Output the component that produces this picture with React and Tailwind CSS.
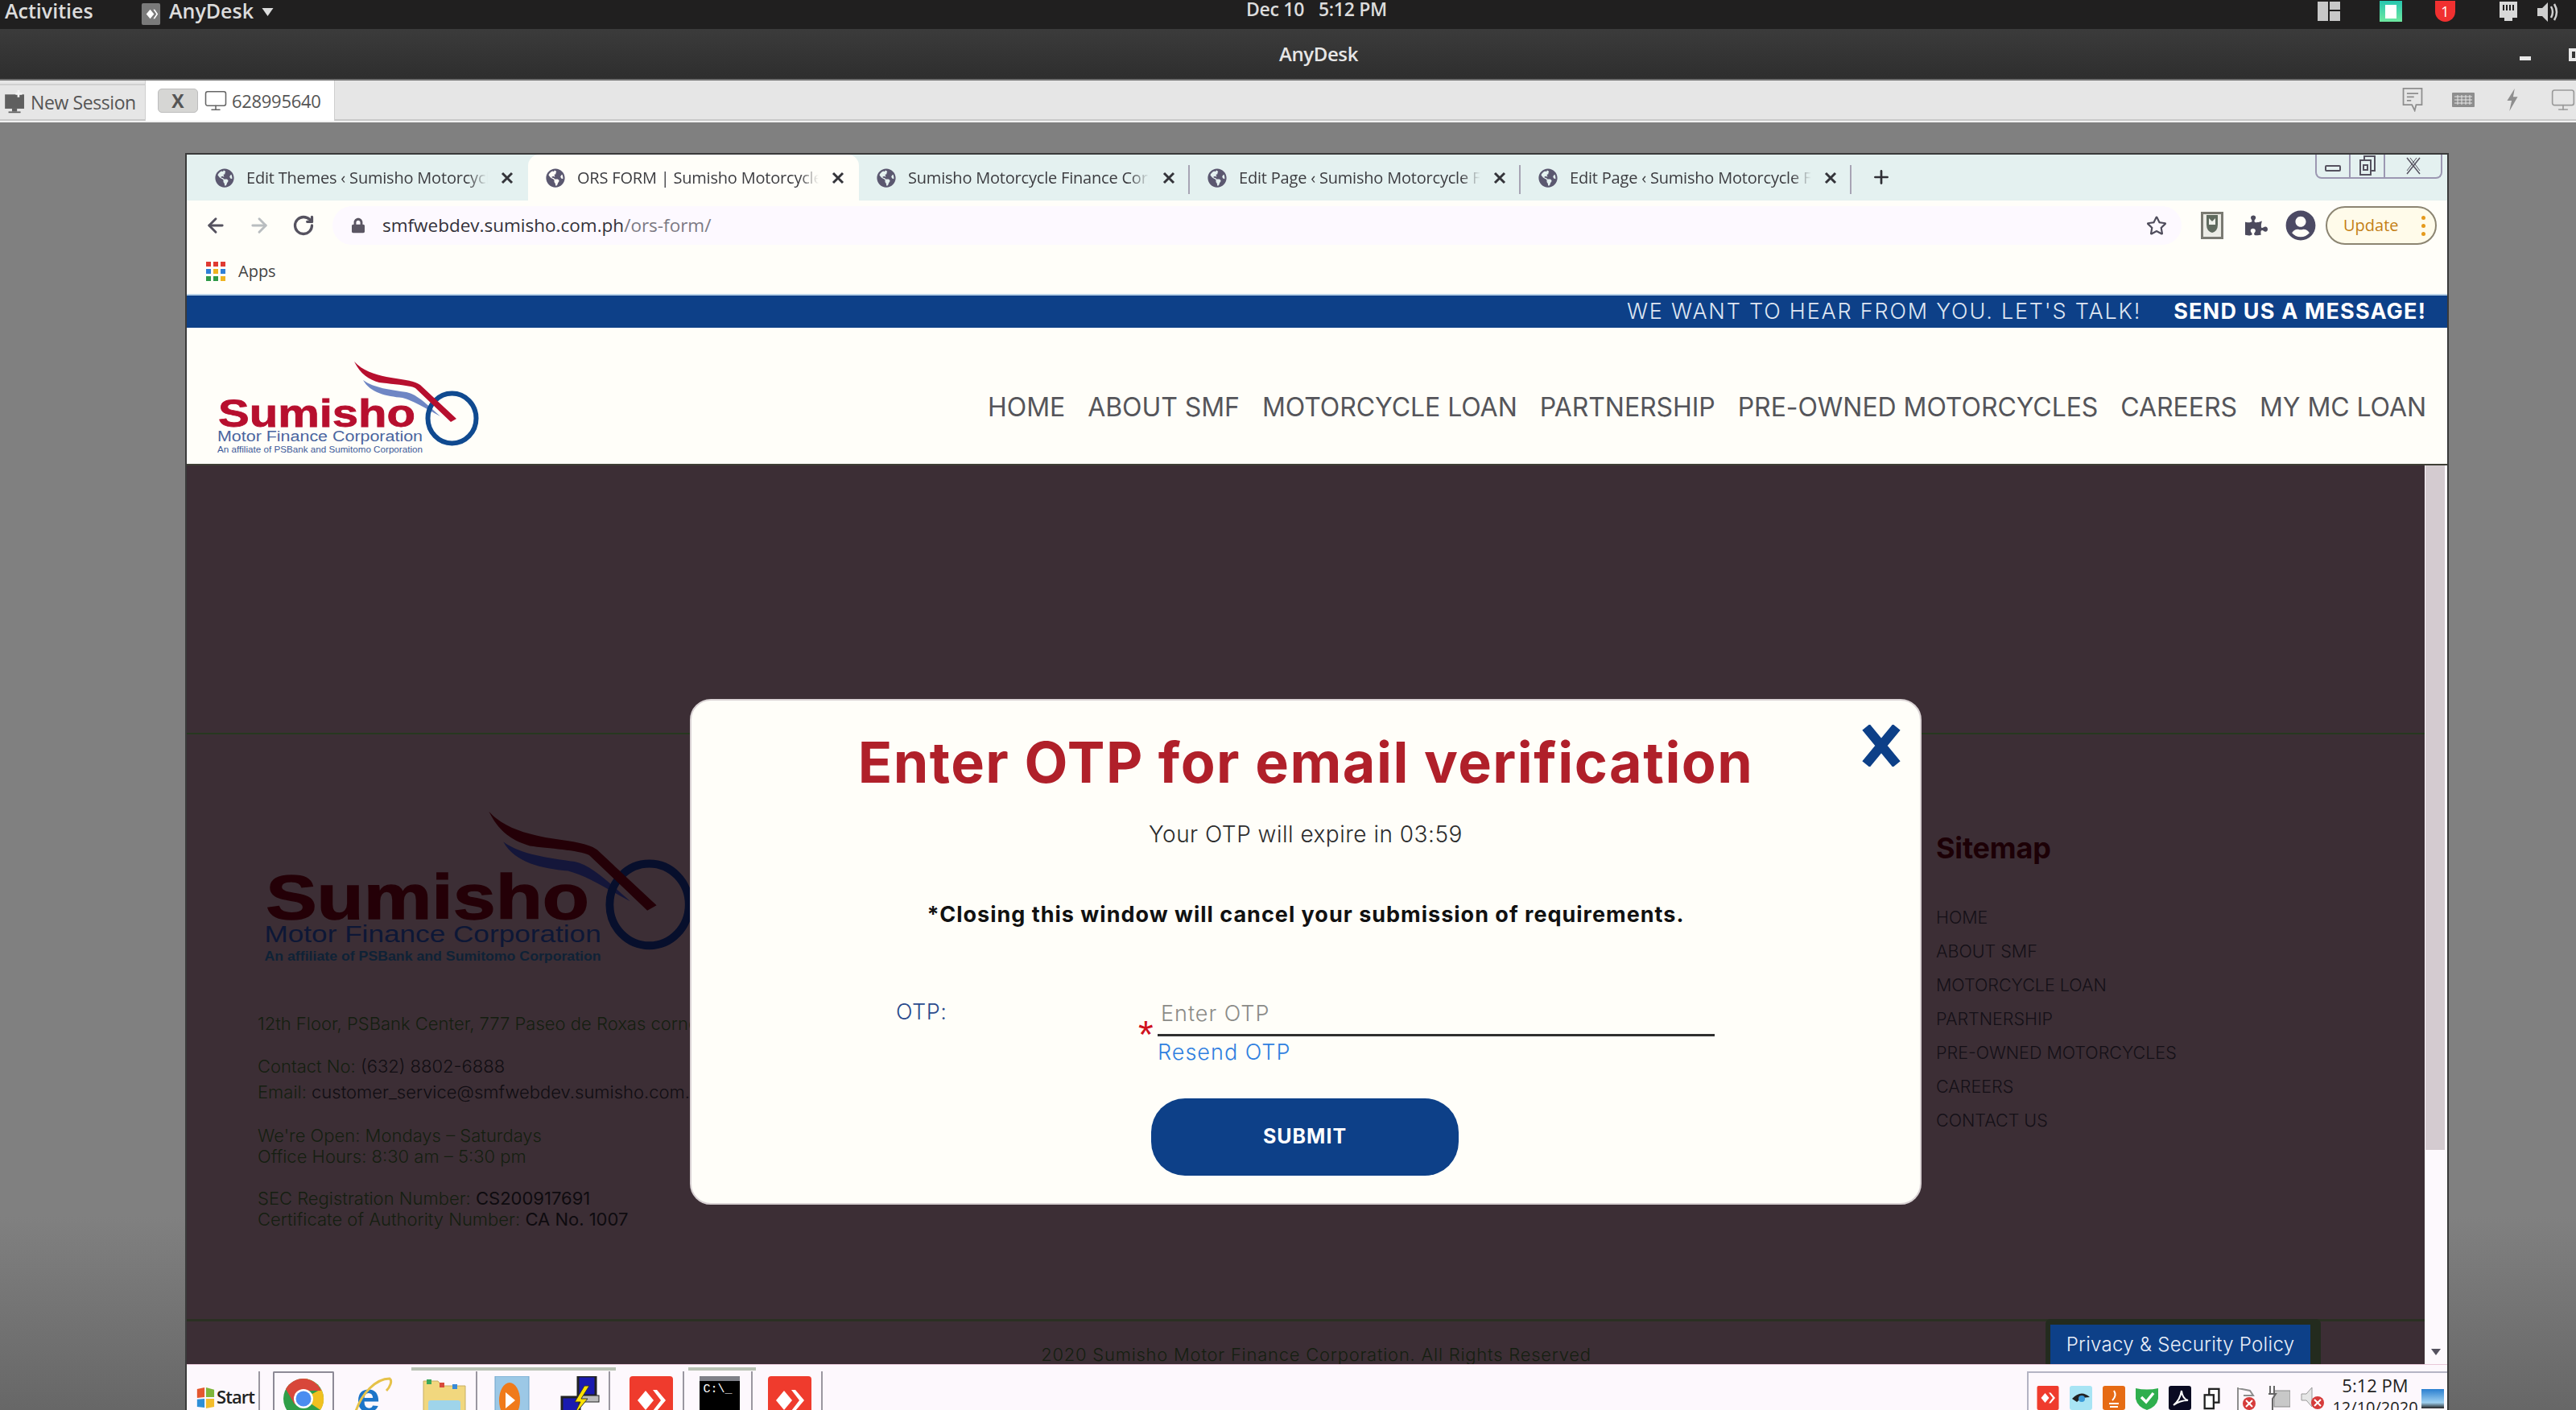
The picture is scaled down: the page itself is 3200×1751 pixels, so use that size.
import React from "react";
import { FaGlobeAmericas, FaPuzzlePiece, FaUserCircle, FaRegStar, FaLock } from "react-icons/fa";
import { ArrowLeft, ArrowRight, RotateCw, Plus, Monitor } from "lucide-react";

function Logo({ dark, className }) {
  const c = dark
    ? { red: "#240007", b1: "#14163a", b2: "#2f2d48", ring: "#070f2c", sub: "#0d1736", aff: "#0f2236" }
    : { red: "#b70f2e", b1: "#3a5aa8", b2: "#c8d0e8", ring: "#104a90", sub: "#4a659f", aff: "#3d5a98" };
  return (
    <svg viewBox="0 0 345 125" className={className}>
      <path d="M191 32 C205 42 225 44 245 47 C258 50 270 62 287 77 C270 68 255 58 240 54 C220 52 200 48 191 32Z" fill={dark ? c.b1 : "#6f86c4"} />
      <ellipse cx="301.5" cy="79.5" rx="30" ry="31" fill="none" stroke={c.ring} strokeWidth="6" />
      <path d="M180 9 C190 20 205 25 220 28 S255 32 262 38 L307 80 L300 84 L256 42 C248 38 225 37 211 35 C198 31 188 25 180 9Z" fill={c.red} />
      <text x="11" y="90" fontFamily="'Liberation Sans',sans-serif" fontWeight="700" fontSize="48" textLength="245" lengthAdjust="spacingAndGlyphs" fill={c.red} stroke={c.red} strokeWidth="0.8">Sumisho</text>
      <text x="10" y="108" fontFamily="'Liberation Sans',sans-serif" fontSize="18" textLength="255" lengthAdjust="spacingAndGlyphs" fill={c.sub}>Motor Finance Corporation</text>
      <text x="10" y="122" fontFamily="'Liberation Sans',sans-serif" fontWeight={dark ? 700 : 400} fontSize="10.5" textLength="255" lengthAdjust="spacingAndGlyphs" fill={c.aff}>An affiliate of PSBank and Sumitomo Corporation</text>
    </svg>
  );
}

function Tab({ title, active, sep }) {
  return (
    <div className={`relative w-[411px] h-full flex items-center pl-[22px] shrink-0 ${active ? "bg-[#fffef9] rounded-t-[14px]" : ""}`}>
      <FaGlobeAmericas className="w-6 h-6 text-[#5b5870] shrink-0 mr-[15px]" />
      <div className="w-[300px] shrink-0 overflow-hidden whitespace-nowrap text-[20px] tracking-[-0.2px] text-[#3c3c40] font-['Open_Sans',sans-serif] [mask-image:linear-gradient(to_right,black_92%,transparent)]">{title}</div>
      <svg viewBox="0 0 16 16" className="w-4 h-4 ml-[16px] shrink-0" stroke="#34343a" strokeWidth="3"><path d="M2 2 L14 14 M14 2 L2 14" /></svg>
      {sep && <div className="absolute right-0 top-[13px] h-[36px] w-[2px] bg-[#a7a4b4]" />}
    </div>
  );
}

function AnyDeskMark({ className }) {
  return (
    <svg viewBox="0 0 54 60" className={className}>
      <rect width="54" height="60" rx="4" fill="#ef3b2d" />
      <path d="M10 30 L20 18 L30 30 L20 42Z" fill="#fff" />
      <path d="M29 17 L34 17 L45 30 L34 43 L29 43 L39 30Z" fill="#fff" />
    </svg>
  );
}

function Cell({ className, children }) {
  return <div className={`h-[60px] flex justify-center pt-[6px] shrink-0 ${className}`}>{children}</div>;
}

const sitemap = ["HOME", "ABOUT SMF", "MOTORCYCLE LOAN", "PARTNERSHIP", "PRE-OWNED MOTORCYCLES", "CAREERS", "CONTACT US"];
const nav = ["HOME", "ABOUT SMF", "MOTORCYCLE LOAN", "PARTNERSHIP", "PRE-OWNED MOTORCYCLES", "CAREERS", "MY MC LOAN"];

export default function App() {
  return (
    <div className="w-[3200px] h-[1751px] overflow-hidden flex flex-col font-[Inter,sans-serif] bg-[#808080]">
      {/* GNOME top bar */}
      <div className="h-9 shrink-0 bg-[#201f1f] flex items-center justify-between relative text-[#dcdcdc] font-['Open_Sans',sans-serif] font-semibold text-[25px] leading-none pb-[10px] overflow-hidden">
        <div className="flex items-center">
          <span className="ml-[6px] w-[169px]">Activities</span>
          <svg viewBox="0 0 24 28" className="w-[25px] h-[27px] mt-[8px]"><rect width="24" height="28" rx="2" fill="#7a7a7a" /><path d="M6 14 L11 8 L16 14 L11 20Z" fill="#fff" /><path d="M15 8 L17 8 L21 14 L17 20 L15 20 L19 14Z" fill="#fff" /></svg>
          <span className="ml-[10px]">AnyDesk</span>
          <svg viewBox="0 0 14 10" className="w-[15px] h-[10px] ml-[10px] mt-[4px]"><path d="M0 0 H14 L7 10Z" fill="#dcdcdc" /></svg>
        </div>
        <div className="absolute left-[1548px] top-0 flex gap-[18px] tracking-[-0.3px] text-[23px]"><span>Dec 10</span><span>5:12 PM</span></div>
        <div className="flex items-center pr-[20px] mt-[10px]">
          <svg viewBox="0 0 28 24" className="w-7 h-6 mb-[8px]"><rect width="13" height="24" fill="#c8c8c8" /><rect x="15" width="13" height="10" fill="#c8c8c8" /><rect x="15" y="12" width="13" height="12" fill="#c8c8c8" /></svg>
          <div className="ml-[49px] w-7 h-[26px] bg-[linear-gradient(#27c6b0,#6fe8a0)] flex items-center justify-center mb-[8px]"><div className="w-[14px] h-[17px] bg-white" /></div>
          <div className="ml-[41px] w-[25px] h-[26px] rounded-b-full bg-[#f03030] text-white text-[18px] font-normal flex items-center justify-center mb-[8px] rounded-t-[10px]">1</div>
          <svg viewBox="0 0 24 26" className="ml-[54px] w-6 h-[26px] mb-[6px]"><path d="M1 0 H23 V20 H17 V24 H7 V20 H1Z" fill="#d8d8d8" /><path d="M6 4 V11 M10 4 V11 M14 4 V11 M18 4 V11" stroke="#201f1f" strokeWidth="2" /></svg>
          <svg viewBox="0 0 28 28" className="ml-[24px] w-7 h-7 mb-[6px]"><path d="M0 9 H6 L13 2 V26 L6 19 H0Z" fill="#cfcfcf" /><path d="M17 7 Q21 14 17 21 M21 4 Q27 14 21 24" fill="none" stroke="#cfcfcf" strokeWidth="2.5" /></svg>
        </div>
      </div>

      {/* AnyDesk title */}
      <div className="h-[64px] shrink-0 relative flex items-center justify-center bg-[linear-gradient(#3b3b3b,#2e2e2e)] border-b-2 border-[#6f6f6f] text-[#e6e6e6] text-[24px] font-semibold font-['Open_Sans',sans-serif] tracking-[-0.4px] pl-[76px]">
        AnyDesk
        <div className="absolute left-[3130px] top-[34px] w-[14px] h-[5px] bg-[#e8e8e8]" />
        <div className="absolute left-[3191px] top-[24px] w-[12px] h-[16px] border-[4px] border-[#e8e8e8]" />
      </div>

      {/* AnyDesk tabs */}
      <div className="h-[50px] shrink-0 relative bg-[#e6e6e6] border-b-2 border-[#c9c9c9] flex text-[#4a4a4a] font-['Open_Sans',sans-serif] text-[23px]">
        <div className="w-[180px] mt-[4px] border-t-2 border-[#d0d0d0] flex items-center pl-[5px] gap-[6px] text-[#555]">
          <svg viewBox="0 0 28 34" className="w-[27px] h-[30px]"><rect y="6" width="27" height="20" fill="#5f5f5f" /><rect x="10" y="26" width="7" height="4" fill="#5f5f5f" /><rect x="5" y="30" width="17" height="2" fill="#5f5f5f" /><path d="M19 0 V10 M15 5 H24" stroke="#f4f4f4" strokeWidth="3" /></svg>
          <span className="tracking-[-0.4px]">New Session</span>
        </div>
        <div className="w-[236px] h-[50px] bg-white border-x border-[#cfcfcf] flex items-center pl-[15px] relative z-10">
          <div className="w-[50px] h-[30px] rounded-[5px] bg-[#d6d6d4] border border-[#bdbdbd] flex items-center justify-center text-[#555] font-bold">X</div>
          <Monitor className="w-[30px] h-[32px] ml-[7px] text-[#666]" strokeWidth={1.25} />
          <span className="ml-[5px] text-[22px] tracking-[-0.3px] text-[#555]">628995640</span>
        </div>
        <div className="absolute right-0 top-0 h-full flex items-center text-[#8e8e8e]">
          <svg viewBox="0 0 28 34" className="w-7 h-[30px]" fill="none" stroke="#8e8e8e" strokeWidth="2"><path d="M1 1 H27 V24 H19 L17 32 L13 24 H1Z" /><path d="M6 8 H22 M6 13 H16 M6 18 H12" /></svg>
          <svg viewBox="0 0 28 18" className="w-7 h-[18px] ml-[35px]"><rect width="28" height="18" rx="1" fill="#8e8e8e" /><path d="M3 5 H25 M3 9 H25 M3 13 H25 M7 3 V15 M12 3 V15 M17 3 V15 M22 3 V15" stroke="#e6e6e6" strokeWidth="1" /></svg>
          <svg viewBox="0 0 16 30" className="w-4 h-[28px] ml-[39px]"><path d="M11 0 L1 16 H7 L4 30 L15 11 H9Z" fill="#8e8e8e" /></svg>
          <Monitor className="w-[32px] h-[32px] ml-[39px] text-[#9a9a9a]" strokeWidth={1.25} />
        </div>
      </div>

      {/* Desktop */}
      <div className="flex-1 min-h-0 pl-[230px] pt-[38px] border-t-2 border-[#f2f2f2] bg-[linear-gradient(#808080_85%,#676767)]">
        <div className="relative w-[2812px] h-full flex flex-col border-x-2 border-t-2 border-[#3a3a3a] bg-[#fdf9fd]">
          {/* Chrome tab strip */}
          <div className="h-[57px] shrink-0 bg-[#e4f1f0] flex items-end pl-[13px]">
            <div className="h-[57px] flex">
              <Tab title="Edit Themes ‹ Sumisho Motorcycle Finance" />
              <Tab title="ORS FORM | Sumisho Motorcycle Finance" active />
              <Tab title="Sumisho Motorcycle Finance Corporation" sep />
              <Tab title="Edit Page ‹ Sumisho Motorcycle Finance" sep />
              <Tab title="Edit Page ‹ Sumisho Motorcycle Finance" sep />
            </div>
            <Plus className="w-[26px] h-[26px] ml-[24px] mb-[16px] text-[#2f2f35]" strokeWidth={2.5} />
          </div>
          <div className="absolute right-[6px] top-0 w-[158px] h-[30px] flex border-x-2 border-b-2 border-[#9c98b2] rounded-b-[8px]">
            <div className="w-[42px] border-r-2 border-[#9c98b2] flex items-end justify-center pb-[7px]"><div className="w-[20px] h-[8px] border-2 border-[#55525f] rounded-[2px]" /></div>
            <div className="w-[43px] border-r-2 border-[#9c98b2] flex items-center justify-center"><svg viewBox="0 0 20 26" className="w-5 h-[26px]" fill="none" stroke="#55525f" strokeWidth="2"><rect x="6" y="1" width="13" height="18" /><rect x="1" y="6" width="13" height="18" fill="#e4f1f0" /><rect x="5" y="12" width="5" height="6" /></svg></div>
            <div className="flex-1 flex items-center justify-center"><svg viewBox="0 0 20 24" className="w-5 h-6" fill="none" stroke="#55525f" strokeWidth="1.5"><path d="M2 2 L18 22 M18 2 L2 22" /><path d="M6 2 L18 18 M14 2 L2 18" strokeWidth="1" /></svg></div>
          </div>

          {/* Toolbar */}
          <div className="h-[69px] shrink-0 bg-[#fffef9] flex items-center pl-[22px] pb-[7px] relative">
            <ArrowLeft className="w-[28px] h-[28px] text-[#55525f] shrink-0" strokeWidth={2.5} />
            <ArrowRight className="w-[28px] h-[28px] ml-[26px] text-[#b9bdc0] shrink-0" strokeWidth={2.5} />
            <RotateCw className="w-[28px] h-[28px] ml-[27px] text-[#55525f] shrink-0" strokeWidth={2.8} />
            <div className="ml-[22px] w-[2297px] h-[48px] shrink-0 rounded-full bg-[#fdf9ff] flex items-center pl-[24px] relative">
              <FaLock className="w-[16px] h-[20px] text-[#5b5663]" />
              <span className="ml-[22px] text-[22.5px] text-[#33323a] font-['Open_Sans',sans-serif]">smfwebdev.sumisho.com.ph<span className="text-[#7c7a84]">/ors-form/</span></span>
              <FaRegStar className="absolute right-[18px] top-[11px] w-[26px] h-[26px] text-[#4f4d5c]" />
            </div>
            <svg viewBox="0 0 28 34" className="ml-[24px] w-[28px] h-[34px] shrink-0"><rect width="28" height="34" fill="#7a7a72" /><rect x="3" y="3" width="22" height="28" fill="#ecece6" /><path d="M7 4 H21 V16 Q21 24 14 26 Q7 24 7 16Z" fill="#5f6a5e" /><path d="M10 8 L14 12 L18 8 V16 H10Z" fill="#eef0ea" /></svg>
            <FaPuzzlePiece className="ml-[27px] w-[28px] h-[28px] text-[#4c4a5c] shrink-0" />
            <FaUserCircle className="ml-[22px] w-[38px] h-[38px] text-[#4c4a64] shrink-0" />
            <div className="ml-[12px] w-[138px] h-[48px] shrink-0 rounded-full border-2 border-[#8c8572] bg-[#fffbea] flex items-center pl-[20px] text-[20px] text-[#c47f16] font-['Open_Sans',sans-serif]">
              Update
              <div className="ml-[28px] flex flex-col gap-[5px]"><div className="w-[5px] h-[5px] rounded-full bg-[#e59a1c]" /><div className="w-[5px] h-[5px] rounded-full bg-[#e59a1c]" /><div className="w-[5px] h-[5px] rounded-full bg-[#e59a1c]" /></div>
            </div>
          </div>

          {/* Bookmarks */}
          <div className="h-[49px] shrink-0 bg-[#fffef9] flex items-center pl-[24px] pb-[10px] border-b-2 border-[#b9d2e8]">
            <div className="grid grid-cols-3 gap-[3px] w-[24px]">
              {["bg-[#e03a32]", "bg-[#e03a32]", "bg-[#e03a32]", "bg-[#2f7fd8]", "bg-[#efb320]", "bg-[#2f7fd8]", "bg-[#2f9a48]", "bg-[#2f9a48]", "bg-[#efb320]"].map((c, i) => (
                <div key={i} className={`h-[6px] ${c}`} />
              ))}
            </div>
            <span className="ml-[16px] text-[20px] text-[#444] font-['Open_Sans',sans-serif]">Apps</span>
          </div>

          {/* Site header */}
          <div className="h-[40px] shrink-0 bg-[#0d4088] flex items-center justify-end pr-[26px] text-[27px] text-[#dfe6f2]">
            <span className="font-light tracking-[1.8px]">WE WANT TO HEAR FROM YOU. LET'S TALK!</span>
            <span className="ml-[40px] font-bold text-white tracking-[1.2px]">SEND US A MESSAGE!</span>
          </div>
          <div className="h-[171px] shrink-0 bg-[#fffef9] flex items-center justify-between pr-[26px] border-b-2 border-[#3f3f36] relative">
            <Logo className="w-[345px] h-[125px] ml-[28px] mt-[21px]" />
            <div className="flex gap-[28px] text-[32px] text-[#55555a] mt-[29px] tracking-[-0.06px]">
              {nav.map((n) => <span key={n}>{n}</span>)}
            </div>
          </div>

          {/* Dimmed page */}
          <div className="flex-1 min-h-0 relative flex bg-[#3c2e35]">
            <div className="flex-1 min-w-0 flex flex-col overflow-hidden">
              <div className="h-[334px] shrink-0 border-b-2 border-[#26381f]" />
              <div className="flex-1 min-h-0 flex">
                <div className="w-[2173px] shrink-0 pt-[81px] pl-[88px] text-[22px] leading-[26px] text-[#141e10] font-light whitespace-nowrap">
                  <Logo dark className="w-[566px] h-[205px] ml-[-8px]" />
                  <p className="mt-[60px]">12th Floor, PSBank Center, 777 Paseo de Roxas corner Sedeño Street, Makati City</p>
                  <p className="mt-[27px]">Contact No: <span className="text-[#100d12]">(632) 8802-6888</span></p>
                  <p className="mt-[6px]">Email: <span className="text-[#100d12]">customer_service@smfwebdev.sumisho.com.ph</span></p>
                  <p className="mt-[28px]">We're Open: Mondays – Saturdays</p>
                  <p>Office Hours: 8:30 am – 5:30 pm</p>
                  <p className="mt-[26px]">SEC Registration Number: <span className="text-[#0e0b0f] font-normal">CS200917691</span></p>
                  <p>Certificate of Authority Number: <span className="text-[#0e0b0f] font-normal">CA No. 1007</span></p>
                </div>
                <div className="pt-[117px] text-[#141017] font-light">
                  <h3 className="text-[36px] leading-[48px] font-bold text-[#1c0006] tracking-[-0.2px]">Sitemap</h3>
                  <div className="mt-[41px] text-[21.5px] leading-[42px]">
                    {sitemap.map((s) => <div key={s}>{s}</div>)}
                  </div>
                </div>
              </div>
              <div className="h-[56px] shrink-0 border-t-[3px] border-[#2a3022] pt-[28px] pl-[26px] text-center text-[22px] leading-[26px] tracking-[0.75px] font-light text-[#141e10]">2020 Sumisho Motor Finance Corporation. All Rights Reserved</div>
            </div>

            {/* Scrollbar */}
            <div className="w-[28px] shrink-0 bg-[#fdf9fd] relative">
              <div className="w-[24px] h-[850px] ml-[1px] bg-[#d4cbd0]" />
              <svg viewBox="0 0 12 8" className="absolute left-[8px] bottom-[11px] w-3 h-2"><path d="M0 0 H12 L6 8Z" fill="#55525f" /></svg>
            </div>

            {/* Privacy tab */}
            <div className="absolute left-[2309px] bottom-0 w-[342px] h-[56px] rounded-t-[6px] bg-[#232b1e] pl-[6px] pt-[7px] pr-[13px]">
              <div className="h-full bg-[#0d4088] flex items-center justify-center text-[24px] text-[#e8eef8] font-light tracking-[0.3px] whitespace-nowrap">Privacy &amp; Security Policy</div>
            </div>

            {/* Modal */}
            <div className="absolute left-[625px] top-[290px] w-[1530px] h-[628px] rounded-[26px] bg-[#fffef9] border-2 border-[#d9d2d4] flex flex-col items-center pt-[37px]">
              <svg viewBox="0 0 50 52" className="absolute right-[23px] top-[30px] w-[50px] h-[52px]"><path d="M6 3 L44 49 M44 3 L6 49" stroke="#0d4088" strokeWidth="12" /></svg>
              <h2 className="h-[80px] leading-[80px] text-[70px] font-bold text-[#b0202a] tracking-[1.5px] whitespace-nowrap">Enter OTP for email verification</h2>
              <p className="mt-[29px] h-10 leading-10 text-[28px] font-light text-[#2c2c2c] tracking-[0.5px]">Your OTP will expire in 03:59</p>
              <p className="mt-[60px] h-10 leading-10 text-[27px] font-bold text-[#111] tracking-[1px]">*Closing this window will cancel your submission of requirements.</p>
              <div className="mt-[81px] w-full pl-[254px] flex">
                <label className="w-[325px] h-10 leading-10 text-[27px] font-light text-[#2a4a8c] tracking-[0.5px]">OTP:</label>
                <div className="w-[692px]">
                  <div className="relative">
                    <span className="absolute left-[-24px] top-[24px] text-[#d0121e] text-[48px] leading-[48px] font-['Liberation_Sans',sans-serif]">*</span>
                    <input readOnly placeholder="Enter OTP" className="w-full h-[50px] pl-1 pb-[5px] border-b-[3px] border-[#2f2f2f] bg-transparent outline-none text-[27px] tracking-[1px] font-light placeholder:text-[#8b8b88]" />
                  </div>
                  <div className="h-10 leading-10 text-[27px] font-light text-[#2f80e0] tracking-[1px]">Resend OTP</div>
                </div>
              </div>
              <button className="mt-[37px] w-[382px] h-[96px] rounded-[42px] bg-[#0d4088] text-white text-[25px] font-bold tracking-[1px] mr-[2px]">SUBMIT</button>
            </div>
          </div>

          {/* Windows taskbar */}
          <div className="h-[57px] shrink-0 bg-[#fdf8fd] border-t border-[#e8c8d8] relative overflow-hidden flex items-start pt-[8px] pl-[6px]">
            <div className="absolute left-[279px] top-[3px] w-[254px] h-[4px] bg-[#b9c2b4]" />
            <div className="absolute left-[623px] top-[3px] w-[84px] h-[4px] bg-[#b9c2b4]" />
            <Cell className="w-[85px] border-r-2 border-[#9a97a0] items-start gap-[2px]">
              <svg viewBox="0 0 26 30" className="w-[24px] h-[30px] mt-[12px] shrink-0"><path d="M2 3 L12 1 V14 L2 15Z" fill="#e4572e" /><path d="M14 1 L25 4 V14 L14 14Z" fill="#7fb539" /><path d="M2 17 L12 16 V28 L2 27Z" fill="#2f8fd8" /><path d="M14 16 L25 16 V27 L14 29Z" fill="#f4bc2c" /></svg>
              <span className="text-[22px] mt-[9px] font-['Open_Sans',sans-serif] font-semibold text-[#222] tracking-[-1px]">Start</span>
            </Cell>
            <Cell className="ml-[16px] w-[76px] border-x-2 border-t-2 border-[#8d8a96] rounded-t-[2px]">
              <svg viewBox="0 0 52 52" className="w-[52px] h-[52px] shrink-0">
                <circle cx="26" cy="26" r="25" fill="#2f9e48" />
                <path d="M26 1 A25 25 0 0 1 48 16 H26Z" fill="#e9b120" />
                <path d="M48 14 A25 25 0 0 1 47 40 L26 26Z" fill="#f0c020" />
                <path d="M26 1 A25 25 0 0 0 4 14 L15 33 L26 16 H48 A25 25 0 0 0 26 1Z" fill="#d8473a" />
                <circle cx="26" cy="26" r="12" fill="#fff" /><circle cx="26" cy="26" r="9.5" fill="#4b8df0" />
              </svg>
            </Cell>
            <Cell className="w-[96px]">
              <svg viewBox="0 0 50 52" className="w-[50px] h-[52px] shrink-0">
                <text x="5" y="44" fontFamily="'Liberation Sans',sans-serif" fontWeight="700" fontSize="52" fill="#1c74c8">e</text>
                <path d="M2 50 C10 20 30 3 46 3 C50 6 46 14 42 18" fill="none" stroke="#e6c24a" strokeWidth="3" />
              </svg>
            </Cell>
            <Cell className="ml-[2px] w-[80px] border-r-2 border-[#9a97a0]">
              <svg viewBox="0 0 56 50" className="w-[56px] h-[50px] shrink-0">
                <path d="M2 6 H20 L25 12 H54 V50 H2Z" fill="#f1d77e" stroke="#c7ae62" /><rect x="6" y="4" width="6" height="6" fill="#3aa85a" /><rect x="22" y="8" width="6" height="6" fill="#d84a3a" /><rect x="38" y="10" width="6" height="6" fill="#3a8ad8" />
                <rect x="8" y="30" width="40" height="20" rx="3" fill="#9fd4ea" />
              </svg>
            </Cell>
            <Cell className="w-[92px] pl-[20px] justify-start">
              <svg viewBox="0 0 46 50" className="w-[46px] h-[50px] shrink-0"><rect width="42" height="50" x="2" fill="#9cc8e6" stroke="#6ea3cc" /><ellipse cx="20" cy="30" rx="13" ry="22" fill="#f07a1a" /><path d="M15 20 L27 30 L15 40Z" fill="#fff" /></svg>
            </Cell>
            <Cell className="w-[73px] border-r-2 border-[#9a97a0]">
              <svg viewBox="0 0 50 52" className="w-[50px] h-[52px] shrink-0"><rect x="22" y="0" width="22" height="24" fill="#1a1ab0" stroke="#222" strokeWidth="3" /><rect x="26" y="24" width="22" height="8" fill="#bbb" stroke="#222" /><rect x="2" y="26" width="22" height="24" fill="#1a1ab0" stroke="#222" strokeWidth="3" /><path d="M30 12 L18 32 L25 32 L16 50 L34 28 L26 28 L36 12Z" fill="#ffe000" stroke="#333" /></svg>
            </Cell>
            <Cell className="ml-[11px] w-[81px] border-r-2 border-[#9a97a0]">
              <AnyDeskMark className="w-[54px] h-[60px] shrink-0" />
            </Cell>
            <Cell className="ml-[4px] w-[81px] border-r-2 border-[#9a97a0]">
              <div className="w-[50px] h-[60px] shrink-0 bg-black border-t-[6px] border-[#7f8088] text-white text-[15px] leading-[22px] pl-[5px] font-['Liberation_Mono',monospace]">C:\_</div>
            </Cell>
            <Cell className="ml-[7px] w-[80px] border-r-2 border-[#9a97a0]">
              <AnyDeskMark className="w-[54px] h-[60px] shrink-0" />
            </Cell>

            {/* Tray */}
            <div className="absolute left-[2286px] top-[8px] w-[522px] h-[60px] border-l-2 border-t-2 border-[#b4b4c4] flex items-start">
              <AnyDeskMark className="ml-[10px] mt-[16px] w-[28px] h-[30px] shrink-0" />
              <svg viewBox="0 0 28 30" className="ml-[13px] mt-[16px] w-[28px] h-[30px] shrink-0"><rect width="28" height="30" rx="3" fill="#a8e4f4" /><path d="M3 16 Q14 4 25 14 Q14 14 9 20Z" fill="#222" /><circle cx="15" cy="16" r="4" fill="#3a9ad8" /></svg>
              <svg viewBox="0 0 28 30" className="ml-[13px] mt-[16px] w-[28px] h-[30px] shrink-0"><rect width="28" height="30" rx="3" fill="#e66a14" /><path d="M8 22 H20 M9 26 H19 M12 18 Q18 12 14 6" stroke="#fff" strokeWidth="2" fill="none" /></svg>
              <svg viewBox="0 0 28 30" className="ml-[13px] mt-[16px] w-[28px] h-[30px] shrink-0"><path d="M0 3 Q14 6 28 3 V16 Q26 26 14 30 Q2 26 0 16Z" fill="#2fae4e" /><path d="M7 14 L13 20 L22 9" fill="none" stroke="#fff" strokeWidth="3.5" /></svg>
              <svg viewBox="0 0 28 30" className="ml-[13px] mt-[16px] w-[28px] h-[30px] shrink-0"><rect width="28" height="30" rx="3" fill="#0a0a22" /><path d="M6 24 Q14 18 16 6 Q17 16 24 18 Q14 18 6 24Z" fill="none" stroke="#fff" strokeWidth="2" /></svg>
              <svg viewBox="0 0 24 30" className="ml-[14px] mt-[18px] w-[24px] h-[28px] shrink-0" fill="#fff" stroke="#222" strokeWidth="2.5"><rect x="8" y="2" width="13" height="18" /><rect x="2" y="10" width="12" height="18" /></svg>
              <svg viewBox="0 0 26 30" className="ml-[17px] mt-[16px] w-[26px] h-[30px] shrink-0"><path d="M3 30 V2 M3 3 L18 6 L22 12 H10" fill="none" stroke="#8d8d8d" strokeWidth="2" /><circle cx="17" cy="22" r="8" fill="#d63b3b" /><path d="M13 18 L21 26 M21 18 L13 26" stroke="#fff" strokeWidth="2" /></svg>
              <svg viewBox="0 0 28 30" className="ml-[14px] mt-[16px] w-[28px] h-[30px] shrink-0"><rect x="8" y="6" width="20" height="20" fill="#c8c8c8" stroke="#888" /><path d="M3 0 V10 M8 0 V10 M1 10 H10 L6 16 V30" fill="none" stroke="#666" strokeWidth="2" /></svg>
              <svg viewBox="0 0 30 30" className="ml-[13px] mt-[16px] w-[30px] h-[30px] shrink-0"><path d="M1 10 H7 L14 2 V26 L7 18 H1Z" fill="#e6e6e6" stroke="#999" /><circle cx="21" cy="21" r="8" fill="#d63b3b" /><path d="M17 17 L25 25 M25 17 L17 25" stroke="#fff" strokeWidth="2" /></svg>
              <div className="ml-[15px] w-[95px] flex flex-col items-center text-[22px] leading-[28px] text-[#222] font-['Open_Sans',sans-serif] whitespace-nowrap mt-[1px]">
                <span>5:12 PM</span>
                <span className="text-[20px]">12/10/2020</span>
              </div>
              <div className="ml-[10px] mt-[20px] w-[28px] h-[24px] shrink-0 bg-[linear-gradient(#2a7fd0,#9ed0f0_70%,#222)]" />
            </div>
          </div>
        </div>
      </div>
    </div>
  );
}
